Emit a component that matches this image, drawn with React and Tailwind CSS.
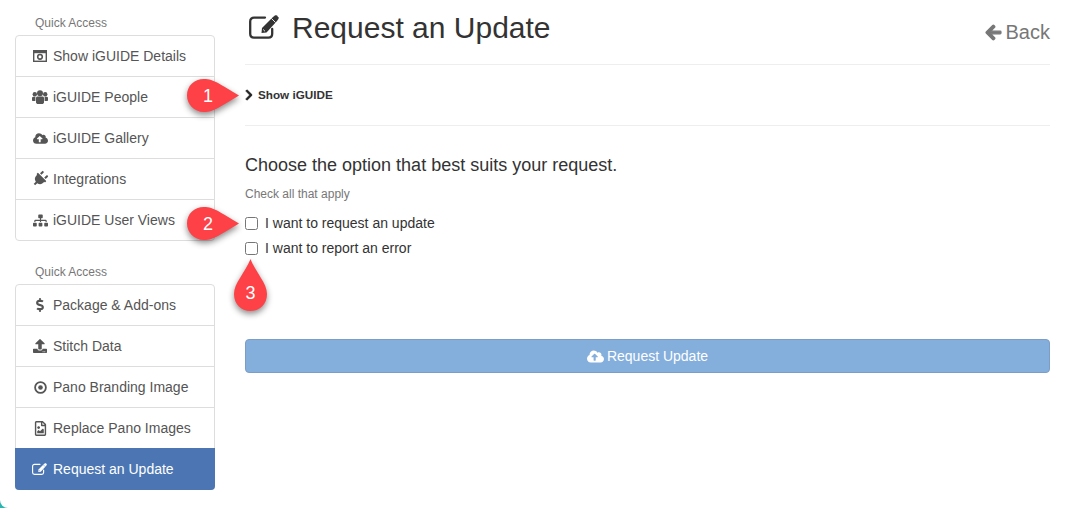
import {
  FaCloudUploadAlt,
  FaPlug,
  FaSitemap,
  FaDollarSign,
  FaUpload,
  FaRegFileImage,
  FaArrowLeft,
  FaChevronRight,
} from "react-icons/fa";

function CameraIcon() {
  return (
    <svg viewBox="0 0 14 12" width="14" height="12" fill="none" stroke="currentColor">
      <rect x="0.7" y="0.7" width="12.6" height="10.6" strokeWidth="1.4" />
      <rect x="0" y="0" width="14" height="3.2" fill="currentColor" stroke="none" />
      <circle cx="7" cy="6.8" r="2.3" strokeWidth="1.6" />
    </svg>
  );
}

function PeopleIcon() {
  return (
    <svg viewBox="0 0 16 14" width="16" height="14" fill="currentColor">
      <circle cx="8" cy="3.2" r="3" />
      <circle cx="2.8" cy="4.2" r="2.2" />
      <circle cx="13.2" cy="4.2" r="2.2" />
      <path d="M4 8C4 7 5 6.6 6 6.6H10C11 6.6 12 7 12 8V12.5C12 13.4 11 14 10 14H6C5 14 4 13.4 4 12.5Z" />
      <path d="M0 8C0 7 1 6.8 2 6.8H3.4V11H1C0.4 11 0 10.6 0 10Z" />
      <path d="M16 8C16 7 15 6.8 14 6.8H12.6V11H15C15.6 11 16 10.6 16 10Z" />
    </svg>
  );
}

function DotCircleIcon() {
  return (
    <svg viewBox="0 0 13 13" width="13" height="13" fill="none" stroke="currentColor">
      <circle cx="6.5" cy="6.5" r="5.4" strokeWidth="1.8" />
      <circle cx="6.5" cy="6.5" r="2.3" fill="currentColor" stroke="none" />
    </svg>
  );
}

// open square with a pencil across the corner
function EditIcon({ size = 14, cut = "white" }) {
  return (
    <svg viewBox="0 0 30 24" width={size} height={(size * 24) / 30} fill="none">
      <path
        d="M16 2.6H5C2.8 2.6 1.2 4.2 1.2 6.4V18.8C1.2 21 2.8 22.6 5 22.6H19.5C21.7 22.6 23.2 21 23.2 18.8V14"
        stroke="currentColor"
        strokeWidth="2.3"
        strokeLinecap="round"
      />
      <path d="M13 13L24 2L26 0.6C26.6 0.2 27.2 0.2 27.8 0.6L29.4 2.2C29.8 2.8 29.8 3.4 29.4 4L28 6L17.5 17.5L12.5 18Z" fill="currentColor" />
      <path d="M22.5 3.5L26.5 7.5" stroke={cut} strokeWidth="0.9" />
      <path d="M14.2 14.5L16 16.3" stroke={cut} strokeWidth="0.9" />
    </svg>
  );
}

const topLinks = [
  { label: "Show iGUIDE Details", icon: <CameraIcon /> },
  { label: "iGUIDE People", icon: <PeopleIcon /> },
  { label: "iGUIDE Gallery", icon: <FaCloudUploadAlt size={15} /> },
  { label: "Integrations", icon: <FaPlug size={16} className="rotate-45" /> },
  { label: "iGUIDE User Views", icon: <FaSitemap size={15} /> },
];

const bottomLinks = [
  { label: "Package & Add-ons", icon: <FaDollarSign size={14} /> },
  { label: "Stitch Data", icon: <FaUpload size={14} /> },
  { label: "Pano Branding Image", icon: <DotCircleIcon /> },
  { label: "Replace Pano Images", icon: <FaRegFileImage size={15} /> },
  { label: "Request an Update", icon: <EditIcon size={15} cut="#4b76b3" />, active: true },
];

function LinkGroup({ title, links }) {
  return (
    <div>
      <div className="pl-[20px] h-[22px] text-[12px] leading-[20px] text-[#777]">{title}</div>
      <div className="flex flex-col rounded-[4px] border border-[#ddd] bg-white">
        {links.map(({ label, icon, active }, i) => (
          <div
            key={label}
            className={`flex items-center text-[14px] ${
              active
                ? "h-[42px] -mx-px -mb-px rounded-b-[4px] bg-[#4b76b3] text-white"
                : i > 0
                  ? "h-[41px] border-t border-[#ddd] text-[#555]"
                  : "h-[40px] text-[#555]"
            }`}
          >
            <span className={`${active ? "w-[38px]" : "w-[37px]"} shrink-0 flex justify-center pr-[5px] pl-[16px]`}>
              {icon}
            </span>
            <span>{label}</span>
          </div>
        ))}
      </div>
    </div>
  );
}

function SidePin({ n, className }) {
  return (
    <div className={`absolute w-[52px] h-[33px] ${className}`}>
      <svg viewBox="0 0 52 33" className="w-full h-full overflow-visible drop-shadow-[0_3px_3px_rgba(0,0,0,0.45)]">
        <path d="M17 0C27 0 34 6 52 16.5C34 27 27 33 17 33C7 33 0 25 0 16.5C0 7 7 0 17 0Z" fill="#fd4146" />
      </svg>
      <span className="absolute left-[11px] top-0 w-[20px] text-center text-[18px] leading-[34px] text-white">{n}</span>
    </div>
  );
}

export default function App() {
  return (
    <div className="relative w-[1070px] h-[508px] overflow-hidden bg-white font-['Liberation_Sans',Arial,sans-serif] text-[#333]">
      <div className="absolute left-0 bottom-0 w-[8px] h-[8px] bg-[#2bb5b0]">
        <div className="w-full h-full rounded-bl-[8px] bg-white" />
      </div>

      <div className="flex pl-[15px] pr-[20px]">
        <aside className="w-[200px] shrink-0 pt-[13px] flex flex-col gap-[21px]">
          <LinkGroup title="Quick Access" links={topLinks} />
          <LinkGroup title="Quick Access" links={bottomLinks} />
        </aside>

        <main className="flex-1 ml-[30px]">
          <div className="flex items-center justify-between h-[65px] pb-[10px] border-b border-[#eee]">
            <h1 className="flex items-center text-[30px] font-normal text-[#333]">
              <span className="ml-[4px] mr-[13px]">
                <EditIcon size={30} />
              </span>
              Request an Update
            </h1>
            <a className="flex items-center gap-[4px] mt-[10px] text-[20px] text-[#777]">
              <FaArrowLeft size={17} stroke="currentColor" strokeWidth={40} />
              Back
            </a>
          </div>

          <div className="flex items-center h-[61px] border-b border-[#eee]">
            <FaChevronRight size={12} stroke="currentColor" strokeWidth={30} className="-ml-[2px] mr-[3px] text-[#222]" />
            <span className="text-[11.7px] font-bold text-[#333]">Show iGUIDE</span>
          </div>

          <h2 className="mt-[29px] text-[18px] leading-[20px] font-normal text-[#333]">
            Choose the option that best suits your request.
          </h2>
          <p className="mt-[11px] text-[12px] leading-[17px] text-[#777]">Check all that apply</p>

          <div className="mt-[14px] flex flex-col gap-[12px] text-[14px] leading-[13px]">
            <label className="flex items-center gap-[7px]">
              <input type="checkbox" className="w-[13px] h-[13px] m-0" />
              I want to request an update
            </label>
            <label className="flex items-center gap-[7px]">
              <input type="checkbox" className="w-[13px] h-[13px] m-0" />
              I want to report an error
            </label>
          </div>

          <button className="mt-[84px] flex items-center justify-center gap-[3px] w-full h-[34px] rounded-[4px] border border-[#7c9dc7] bg-[#84aedc] text-[14px] text-white">
            <FaCloudUploadAlt size={17} />
            Request Update
          </button>
        </main>
      </div>

      <SidePin n="1" className="left-[187px] top-[79px]" />
      <SidePin n="2" className="left-[187px] top-[207px]" />
      <div className="absolute left-[234px] top-[259px] w-[33px] h-[52px]">
        <svg viewBox="0 0 33 52" className="w-full h-full overflow-visible drop-shadow-[0_3px_3px_rgba(0,0,0,0.45)]">
          <path d="M16.5 0C22 14 33 24 33 35C33 45 26 52 16.5 52C7 52 0 45 0 35C0 24 11 14 16.5 0Z" fill="#fd4146" />
        </svg>
        <span className="absolute inset-x-0 top-[22px] text-center text-[18px] leading-[24px] text-white">3</span>
      </div>
    </div>
  );
}
